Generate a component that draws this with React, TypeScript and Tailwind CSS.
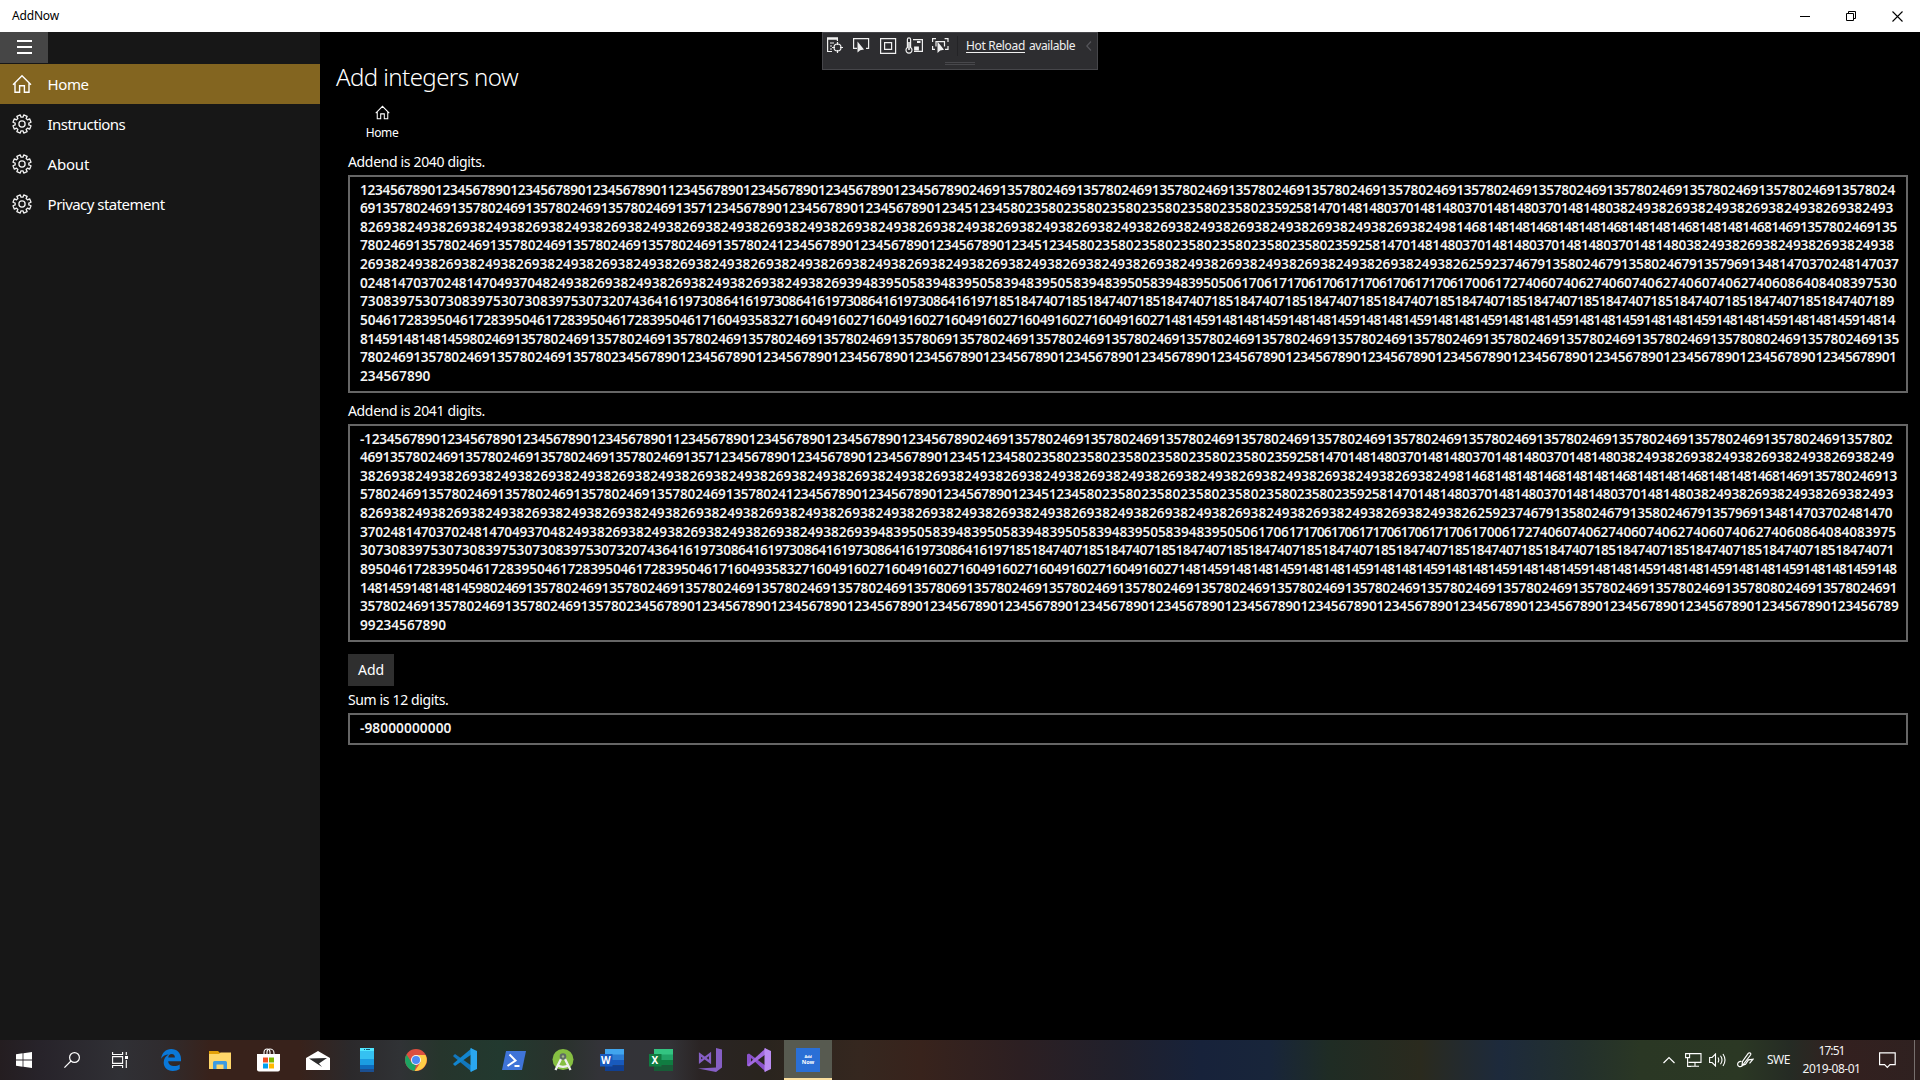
import React, { useLayoutEffect, useRef, useState } from "react";

/* Text run whose tracking is adjusted so that it spans exactly `w` pixels. */
function Fit({ w, children, className = "" }: { w: number; children: string; className?: string }) {
  const ref = useRef<HTMLSpanElement>(null);
  const [ls, setLs] = useState(0);
  useLayoutEffect(() => {
    if (ref.current) {
      const natural = ref.current.getBoundingClientRect().width - ls * children.length;
      setLs((w - natural) / children.length);
    }
  }, [w, children]);
  return (
    <span ref={ref} className={"inline-block whitespace-pre " + className} style={{ letterSpacing: ls + "px" }}>
      {children}
    </span>
  );
}

const r = (s: string, n: number) => s.repeat(n);
const DOUBLE = "2469135780";
const COUNT = "1234567890";
const MIX = r(COUNT, 3) + "1234512345" + r("80235", 7) + "925814701481480" + r("3701481480", 3);

const HEAD =
  r(COUNT, 4) + "1" + r(COUNT, 4) + r(DOUBLE, 12) + "24" +
  "69135780" + r(DOUBLE, 3) + "24691357" + MIX + r("3824938269", 3) + "382493" +
  "8269" + r("3824938269", 13) + "382498" + r("1468148148", 4) + "14681469135780" + "2469135" +
  "780" + r(DOUBLE, 5) + "24" + MIX + r("3824938269", 2) + "3824938" +
  "269" + r("3824938269", 13) + "3824938262592374679" + r("1358024679", 2) + "13579" + "6913481470370248147037" +
  "024814703702481470493704" + r("8249382693", 4) + r("9483950583", 4) + "94839505" + r("0617061717", 3) + "0617" +
  "0061727406" + r("0740627406", 3) + "086408408397530" +
  r("7308397530", 3) + "7320743641619" + r("7308641619", 4) + r("7185184740", 12) + "7189" +
  r("5046172839", 4) + "504617" + "1604935832" + r("7160491602", 5) + "7" + r("1481459148", 10) + "14" +
  "814591481481459" + "80" + r(DOUBLE, 6) + "69135780" + r(DOUBLE, 10) + "80" + DOUBLE + "2469135" +
  "780" + r(DOUBLE, 3) + r("2345678901", 17);

const FIRST = HEAD + "234567890";
const SECOND = FIRST.slice(0, -11) + "99234567890";

const FIRST_BREAKS = [0, 203, 405, 606, 808, 1007, 1208, 1415, 1624, 1828, 2031, 2040];
const FIRST_WIDTHS = [1535, 1533.4, 1537, 1534, 1538.5, 1536.8, 1533.8, 1534.8, 1539, 1536.4, 70.4];
const SECOND_BREAKS = [0, 202, 404, 605, 807, 1005, 1206, 1413, 1622, 1826, 2029, 2040];
const SECOND_WIDTHS = [1532.4, 1534, 1537, 1533.4, 1532, 1536, 1533.8, 1536.4, 1537, 1538.4, 86];

const chunkWeight = (s: string) =>
  s.split("").reduce((a, c) => a + (c === "1" ? 5.35 : c === "-" ? 5.6 : 7.82), 0);

function DigitLine({ text, width }: { text: string; width: number }) {
  const parts = text.match(/.{1,24}/g) || [];
  const total = chunkWeight(text);
  return (
    <div className="flex h-[18.62px] whitespace-pre leading-[18.62px]">
      {parts.map((p, i) => (
        <Fit key={i} w={(chunkWeight(p) * width) / total}>{p}</Fit>
      ))}
    </div>
  );
}

function DigitBox({ value, breaks, widths, prefix = "" }: { value: string; breaks: number[]; widths: number[]; prefix?: string }) {
  return (
    <div className="h-[218px] border-2 border-[#666666] pl-[10px] pt-[3.65px] text-[13.7px] font-semibold text-[#f4f4f4]">
      {widths.map((w, i) => (
        <DigitLine key={i} text={(i === 0 ? prefix : "") + value.slice(breaks[i], breaks[i + 1])} width={w} />
      ))}
    </div>
  );
}

const HomeIcon = ({ size }: { size: number }) => (
  <svg width={size} height={size} viewBox="0 0 20 20" fill="none" stroke="#fff" strokeWidth="1.4">
    <path d="M1 10.8 10 1.8l9 9M3 9v9.3h4.6v-6.5h4.8v6.5H17V9" />
  </svg>
);

const gearPath = (() => {
  const pts: string[] = [];
  for (let i = 0; i < 8; i++) {
    const c = (i * Math.PI) / 4 + Math.PI / 8;
    [[-0.25, 6.9], [-0.2, 9.2], [0.2, 9.2], [0.25, 6.9]].forEach(([d, rad]) => {
      pts.push((10 + rad * Math.cos(c + d)).toFixed(2) + " " + (10 + rad * Math.sin(c + d)).toFixed(2));
    });
  }
  return "M" + pts.join("L") + "Z";
})();

const GearIcon = () => (
  <svg width="20" height="20" viewBox="0 0 20 20" fill="none" stroke="#f2f2f2" strokeWidth="1.3" strokeLinejoin="round">
    <path d={gearPath} />
    <circle cx="10" cy="10" r="3.1" />
  </svg>
);

function NavItem({ label, w, active = false, icon }: { label: string; w: number; active?: boolean; icon: React.ReactNode }) {
  return (
    <div className={"flex h-10 items-center pl-3 " + (active ? "bg-[#836520]" : "")}>
      <div className="w-[35.6px]">{icon}</div>
      <Fit w={w} className="text-[15px] text-white">{label}</Fit>
    </div>
  );
}

function DevToolbar() {
  return (
    <div className="absolute left-[822px] top-8 flex h-[38px] w-[276px] flex-col border border-[#46464a] bg-[#2d2d30] text-[12px] text-[#f0f0f0]">
      <div className="flex h-[26px] items-center pl-[4px]">
        <svg width="130" height="18" viewBox="0 0 130 18" fill="none" stroke="#f0f0f0" strokeWidth="1.2">
          <path d="M0 1.5h11" strokeWidth="2.5" />
          <path d="M.6 1v13.5H5M10.400 1v3M3 6h4M3 9h2M3 12h2" />
          <circle cx="10.500" cy="10.500" r="3.500" />
          <path d="M10.500 5v3M10.500 13v3M5 10.500h3M13 10.500h3" />
          <path d="M30 11.400h-3.400V1.600h15v9.800H39" />
          <path d="M30.500 4.500v11l2.700-2.300 3.800-.7z" fill="#f0f0f0" stroke="none" />
          <path d="M53.600 1.600h15v14.800h-15zM57.600 5.600h7v6.800h-7z" />
          <path d="M80.400 10.600V2.500a1.600 1.600 0 0 1 3.200 0v8.100a3 3 0 1 1-3.200 0z" />
          <path d="M82 5v8" strokeWidth="1.600" />
          <path d="M86 2.600h9.400v11.800H87" />
          <path d="M90 5h3.500M88 10.500h3v2h-3z" strokeWidth="1.800" />
          <path d="M105.600 5V1.600h3.400M117.600 1.600h3.400V5M105.600 9v3.400h2.400M121 9v3.400h-3M109 9.500V4.600h8.500v5" />
          <path d="M110.500 4.500v11.500l2.700-2.600 3.800-.7z" fill="#f0f0f0" stroke="none" />
        </svg>
        <div className="h-5 w-px bg-[#232326]" />
        <div className="ml-[8px] flex gap-[4px]">
          <Fit w={59} className="underline underline-offset-2">Hot Reload</Fit>
          <Fit w={46}>available</Fit>
        </div>
        <svg className="ml-[11px]" width="6" height="10" viewBox="0 0 6 10" fill="none" stroke="#55555a" strokeWidth="1.2">
          <path d="M5 .5.8 5 5 9.500" />
        </svg>
      </div>
      <div className="mx-auto mt-[3px] flex w-[30px] flex-col gap-px">
        <div className="h-px bg-[#48484c]" />
        <div className="h-px bg-[#48484c]" />
      </div>
    </div>
  );
}

const Slot = ({ children }: { children: React.ReactNode }) => (
  <div className="flex h-10 w-[49px] shrink-0 items-center justify-center">{children}</div>
);

function Taskbar() {
  return (
    <div className="flex h-10 items-center bg-[linear-gradient(90deg,#241d20_0px,#27232a_40px,#303035_120px,#2f2c2f_160px,#38221b_210px,#38221b_300px,#2b292b_350px,#303235_400px,#26352c_440px,#22392f_500px,#29322c_560px,#333338_600px,#333337_670px,#2a2424_700px,#29241e_760px,#35271f_860px,#38231c_920px,#2c1f22_1020px,#20202c_1120px,#17223a_1200px,#18253a_1270px,#1f2c24_1330px,#2a2a1e_1420px,#1d2a3c_1500px,#23302c_1580px,#2a3724_1640px,#2b3824_1740px,#252b24_1790px,#33201f_1840px,#2f2120_1920px)]">
      <div className="mr-[2px] flex w-36 shrink-0 items-center justify-around">
        <svg width="16" height="16" viewBox="0 0 16 16" fill="#fff"><path d="M0 2.200 6.600 1.300v6.300H0zM7.400 1.200 16 0v7.600H7.400zM0 8.400h6.600v6.300L0 13.800zM7.400 8.400H16V16l-8.600-1.200z" /></svg>
        <svg width="16" height="16" viewBox="0 0 16 16" fill="none" stroke="#fff" strokeWidth="1.200"><circle cx="10.500" cy="5.500" r="4.900" /><path d="M7 9 .4 15.600" /></svg>
        <svg width="16" height="16" viewBox="0 0 16 16" fill="none" stroke="#fff" strokeWidth="1.100"><path d="M.6 0v2.500h10V0M.6 16v-2.500h10V16M.6 4.600h10v6.800H.6zM14.300 0v3M14.300 8v8" /><path d="M13 4h3v3h-3z" fill="#fff" stroke="none" /></svg>
      </div>
      <Slot>
        <svg width="20" height="22" viewBox="0 0 20 22"><path d="M.2 9.700C.8 3.800 4.800 0 10.200 0 16 0 20 4 20 10v2.300H7.200c.2 3.500 3 4.800 6 4.800 2 0 3.900-.5 5.500-1.500v4.500C16.900 21.300 14.500 22 11.800 22 6 22 2.700 18.300 2.700 13.500c0-3.500 1.800-6.300 4.900-7.900C4.700 5.600 2 7 .2 9.700zM7.300 8.500h6.600c0-2.300-1-3.500-3.200-3.500S7.500 6.500 7.300 8.500z" fill="#0a78d8" /></svg>
      </Slot>
      <Slot>
        <svg width="22" height="19" viewBox="0 0 22 19"><path d="M0 0h9l2 2h11v16H0z" fill="#e3a008" /><path d="M0 3h10l1.500-1.500H22V18H0z" fill="#ffd76a" /><path d="M4 18v-6.500a1.500 1.500 0 0 1 1.500-1.500h11a1.500 1.500 0 0 1 1.500 1.500V18h-3.500v-4.500h-7V18z" fill="#3e9be0" /></svg>
      </Slot>
      <Slot>
        <svg className="-mt-px" width="23" height="24" viewBox="0 0 23 24"><path d="M7 8V4.500C7 2 8.500 1 10 1s3 1 3 3.500V8M10 8V4c0-2 1.500-3 3-3s4 1 4 4v3" fill="none" stroke="#fff" strokeWidth="1.100" /><path d="M0 6h23v15.500a2 2 0 0 1-2 2H2a2 2 0 0 1-2-2z" fill="#fff" /><path d="M6 9.500h5v5H6z" fill="#f04e23" /><path d="M12 9.500h5v5h-5z" fill="#7db700" /><path d="M6 15.500h5v5H6z" fill="#00a1f1" /><path d="M12 15.500h5v5h-5z" fill="#ffb900" /></svg>
      </Slot>
      <Slot>
        <svg width="24" height="19" viewBox="0 0 24 19"><path d="M0 7 12 0l12 7v12H0z" fill="#fff" /><path d="m3 7.500 18-.5-8 5.500 3 3.500z" fill="#2b2a2b" /></svg>
      </Slot>
      <Slot>
        <svg width="14" height="24" viewBox="0 0 14 24"><path d="M0 0h14v24H0z" fill="#35c1f1" /><path d="M0 0h14v3H0z" fill="#50e6ff" /><path d="M0 11h14v6H0z" fill="#1b9de2" /><path d="M0 17h14v4H0z" fill="#0f6cbd" /><path d="M0 21h14v3H0z" fill="#1b4f91" /><path d="M4 1.500h1M6 1.500h4" stroke="#12556e" /></svg>
      </Slot>
      <Slot>
        <svg width="22" height="22" viewBox="0 0 22 22"><circle cx="11" cy="11" r="11" fill="#dd4f40" /><path d="M1.500 5.500 6.600 13.600 11 16.200 9.500 21.900A11 11 0 0 1 1.500 5.500z" fill="#1da462" /><path d="M20.500 6H11l4.500 7.500L9.700 21.900A11 11 0 0 0 20.500 6z" fill="#ffcd46" /><circle cx="11" cy="11" r="5" fill="#f4f4f4" /><circle cx="11" cy="11" r="4" fill="#4c8bf5" /></svg>
      </Slot>
      <Slot>
        <svg width="24" height="24" viewBox="0 0 24 24"><path d="m0 8 2-2 17 12v6L1 9z" fill="#1277bd" /><path d="m0 16 2 2L19 6V0L1 15z" fill="#1285cf" /><path d="m17.500 0 6.500 3v18l-6.500 3z" fill="#2aa7f0" /></svg>
      </Slot>
      <Slot>
        <svg width="24" height="19" viewBox="0 0 24 19"><path d="M4 0h20l-4 19H0z" fill="#3f74d8" /><path d="m7.500 3.500 6 6-8 5.500M12.500 15h5" fill="none" stroke="#fff" strokeWidth="2" /></svg>
      </Slot>
      <Slot>
        <svg width="22" height="24" viewBox="0 0 22 24"><circle cx="11" cy="11.500" r="10.500" fill="#86bf42" /><path d="m10 9-6.500 13M12 9l6.500 13M5 17c4 2.500 8 2.500 12 0" fill="none" stroke="#f0f0f0" strokeWidth="2.300" /><circle cx="11" cy="8.500" r="3.300" fill="#5f6c66" /><circle cx="11" cy="8.500" r="1.200" fill="#a5bd83" /></svg>
      </Slot>
      <Slot><OfficeIcon letter="W" a="#41a5ee" b="#2b7cd3" c="#185abd" d="#103f91" /></Slot>
      <Slot><OfficeIcon letter="X" a="#33c481" b="#21a366" c="#107c41" d="#185c37" /></Slot>
      <Slot>
        <svg width="24" height="24" viewBox="0 0 24 24"><path d="m18 0 6 1.500v18L18 24 0 20.500l18-1z" fill="#865fc5" /><path d="m2 6.500 10 7.500V6L2 13.700z" fill="none" stroke="#865fc5" strokeWidth="2.200" /></svg>
      </Slot>
      <Slot>
        <svg width="24" height="24" viewBox="0 0 24 24"><path d="m0 6.500 2-1L19 18v6L4 10v5.500l-3 2-1-.5z" fill="#8b52cc" /><path d="m0 17.500 2 1L19 6V0L2 15.500z" fill="#a36be0" /><path d="m17.500 0 6.500 3v18l-6.500 3z" fill="#bb8cf2" /></svg>
      </Slot>
      <div className="ml-px flex h-10 w-12 shrink-0 flex-col items-center justify-start border-b-2 border-[#fbe0a0] bg-[#575a50] pt-[8px]">
        <div className="flex h-6 w-6 flex-col items-center bg-[#2a6fd6] pt-[6px] font-bold leading-none text-white">
          <Fit w={7} className="h-[5px] text-[4px] leading-[5px]">Add</Fit>
          <Fit w={12.5} className="text-[5.5px] leading-[7px]">Now</Fit>
        </div>
      </div>
      <div className="ml-auto flex h-10 items-center text-[12px] text-[#f4f4f4]">
        <svg width="12" height="8" viewBox="0 0 12 8" fill="none" stroke="#fff" strokeWidth="1.200"><path d="M.5 7 6 1.500 11.500 7" /></svg>
        <svg className="ml-[10px]" width="17" height="14" viewBox="0 0 17 14" fill="none" stroke="#fff" strokeWidth="1.100"><path d="M5 .6h11v8.800H3.500M10 9.500v3.500M6 13.300h8M.6.6h4v4h-4zM2.600 5v8.400H6" /></svg>
        <svg className="ml-[7px]" width="17" height="14" viewBox="0 0 17 14" fill="none" stroke="#fff" strokeWidth="1.100"><path d="M.6 4.500h2.500L6.500 1v12L3.100 9.500H.6zM9 4.500q1.500 2.500 0 5M11.500 2.800q3 4.200 0 8.400M14 1q4 6 0 12" /></svg>
        <svg className="ml-[11px]" width="17" height="16" viewBox="0 0 17 16" fill="none" stroke="#fff" strokeWidth="1.200"><path d="M4.500 9.500c-2-.5-3.900.7-3.900 2.800 0 2 2.400 3.200 4.400 1.700L13.500 3c1-1.500-1-3-2.300-1.700L5.500 9.500 5 13.500l3.500-1.200 3-4.500 4.500-.5-3.500 4" /></svg>
        <Fit w={23} className="ml-[13px]">SWE</Fit>
        <div className="ml-[12px] flex w-[59px] flex-col items-center">
          <Fit w={26} className="h-[18px] leading-[18px]">17:51</Fit>
          <Fit w={58} className="h-[18px] leading-[18px]">2019-08-01</Fit>
        </div>
        <svg className="ml-[18px]" width="17" height="17" viewBox="0 0 17 17" fill="none" stroke="#fff" strokeWidth="1.200"><path d="M.6.800h15.600v11.800h-5.200l-2.700 2.800-2.700-2.800H.6z" /></svg>
        <div className="ml-[18px] h-10 w-px bg-[#77706e]" />
        <div className="w-[5px]" />
      </div>
    </div>
  );
}

function OfficeIcon({ letter, a, b, c, d }: { letter: string; a: string; b: string; c: string; d: string }) {
  return (
    <div className="relative h-[22px] w-6">
      <svg width="24" height="22" viewBox="0 0 24 22">
        <path d="M5 0h19v6H5z" fill={a} /><path d="M5 5.500h19V11H5z" fill={b} /><path d="M5 11h19v5.500H5z" fill={c} /><path d="M5 16.500h19V22H5z" fill={d} />
        <path d="M0 5h12.500v12.500H0z" fill={c} />
      </svg>
      <span className="absolute left-0 top-[5px] w-[12.5px] text-center text-[10px] font-bold leading-[12px] text-white">{letter}</span>
    </div>
  );
}

export default function App() {
  return (
    <div className="relative flex h-[1080px] w-[1920px] flex-col overflow-hidden bg-black font-['Noto_Sans','Open_Sans',sans-serif] text-white">
      <header className="flex h-8 shrink-0 items-center justify-between bg-white pl-3 pr-[17px] text-[12px] text-black">
        <Fit w={47}>AddNow</Fit>
        <div className="flex items-center gap-[35px]">
          <svg width="11" height="11" viewBox="0 0 11 11" stroke="#000"><path d="M0 5.500h10" /></svg>
          <svg width="11" height="11" viewBox="0 0 11 11" fill="none" stroke="#000"><path d="M.5 2.500h7v7h-7zM2.500 2.500v-2h7v7h-2" /></svg>
          <svg width="11" height="11" viewBox="0 0 11 11" stroke="#000" strokeWidth="1.100"><path d="m.5.5 10 10M10.500.5l-10 10" /></svg>
        </div>
      </header>
      <div className="flex h-[1008px] shrink-0">
        <nav className="flex w-80 shrink-0 flex-col bg-[#171717]">
          <div className="mb-px flex h-[31px] w-12 flex-col items-start gap-1 bg-[#464646] pl-[17px] pt-2">
            <div className="h-0.5 w-[15px] bg-white" />
            <div className="h-0.5 w-[15px] bg-white" />
            <div className="h-0.5 w-[15px] bg-white" />
          </div>
          <NavItem label="Home" w={41} active icon={<HomeIcon size={20} />} />
          <NavItem label="Instructions" w={77.5} icon={<GearIcon />} />
          <NavItem label="About" w={41.5} icon={<GearIcon />} />
          <NavItem label="Privacy statement" w={117} icon={<GearIcon />} />
        </nav>
        <main className="flex w-[1600px] flex-col pl-7 pr-3">
          <div className="-ml-3 mt-[29px] h-8 text-[24px] font-light leading-8">
            <Fit w={182}>Add integers now</Fit>
          </div>
          <div className="ml-[11px] mt-[12px] flex h-9 w-[46px] flex-col items-center">
            <HomeIcon size={15} />
            <Fit w={32.5} className="mt-[5px] text-[12px] leading-4">Home</Fit>
          </div>
          <div className="mt-[10.5px] h-[23.5px] text-[14px] leading-5">
            <Fit w={137}>Addend is 2040 digits.</Fit>
          </div>
          <DigitBox value={FIRST} breaks={FIRST_BREAKS} widths={FIRST_WIDTHS} />
          <div className="mt-[8px] h-[23px] text-[14px] leading-5">
            <Fit w={137}>Addend is 2041 digits.</Fit>
          </div>
          <DigitBox value={SECOND} breaks={SECOND_BREAKS} widths={SECOND_WIDTHS} prefix="-" />
          <button className="mt-3 flex h-8 w-[46px] items-center justify-center bg-[#2f2f2f] pb-[2px] text-[14px]">
            <Fit w={26}>Add</Fit>
          </button>
          <div className="mt-[4px] h-[23px] text-[14px] leading-5">
            <Fit w={100.5}>Sum is 12 digits.</Fit>
          </div>
          <div className="h-8 border-2 border-[#666666] pl-[10px] pt-[4px] text-[13.7px] font-semibold leading-[18.62px] text-[#f4f4f4]">
            <Fit w={91.5}>-98000000000</Fit>
          </div>
        </main>
      </div>
      <Taskbar />
      <DevToolbar />
    </div>
  );
}
